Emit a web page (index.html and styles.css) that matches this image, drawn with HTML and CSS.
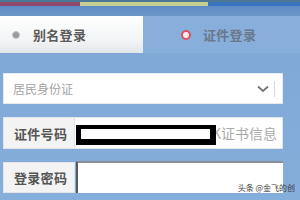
FILE: index.html
```html
<!DOCTYPE html>
<html lang="zh">
<head>
<meta charset="utf-8">
<link rel="stylesheet" href="styles.css">
</head>
<body>
<div class="top"></div>
<div class="stripe"><span class="s1"></span><span class="s2"></span><span class="s3"></span></div>
<div class="band"></div>
<div class="tabs">
  <div class="tab tab-a"><span class="radio radio-off"></span><span class="tab-text">别名登录</span></div>
  <div class="tab tab-b"><span class="radio radio-on"></span><span class="tab-text">证件登录</span></div>
</div>
<div class="content">
  <div class="select">
    <span class="select-text">居民身份证</span>
    <svg class="chev" width="12" height="8" viewBox="0 0 12 8"><path d="M1 1.5 L6 6 L11 1.5" fill="none" stroke="#777" stroke-width="1.8"/></svg>
    <span class="select-sep"></span>
  </div>
  <div class="row row-id">
    <div class="label">证件号码</div>
    <div class="field">
      <span class="redact"></span><span class="hint">K证书信息</span>
    </div>
  </div>
  <div class="row row-pw">
    <div class="label">登录密码</div>
    <div class="field field-pw"></div>
  </div>
</div>
<div class="watermark">头条 @金飞的创</div>
</body>
</html>
```
FILE: styles.css
```css
html, body {
  margin: 0;
  padding: 0;
}
body {
  width: 300px;
  height: 200px;
  overflow: hidden;
  background: linear-gradient(#7ea7d7, #86aedb);
  font-family: "Noto Sans CJK SC", "Noto Sans", sans-serif;
  position: relative;
}
.top {
  height: 2px;
  background: #4b7897;
}
.stripe {
  display: flex;
  height: 4px;
}
.s1 { width: 80px; background: #8e4b6d; }
.s2 { width: 128px; background: #c6cf90; }
.s3 { flex: 1; background: #3a73c0; }
.band {
  height: 10px;
  background: linear-gradient(#5f8cc4, #6c95c9);
}
.tabs {
  display: flex;
  height: 37px;
}
.tab {
  display: flex;
  align-items: center;
}
.tab-a {
  width: 131px;
  padding-left: 12px;
  background: linear-gradient(#ffffff, #f4f5f6 60%, #e4e7eb);
}
.tab-b {
  flex: 1;
  padding-left: 38px;
  background: #88aedb;
}
.radio {
  border-radius: 50%;
  box-sizing: border-box;
  flex: none;
}
.radio-off {
  width: 8px;
  height: 8px;
  background: #9a9a9a;
  border: 1px solid #c8c8c8;
  margin-right: 13px;
}
.radio-on {
  width: 10px;
  height: 10px;
  background: #fbeaec;
  border: 2px solid #d4545f;
  margin-right: 12px;
}
.tab-text {
  font-size: 13px;
  font-weight: 700;
  letter-spacing: 0.3px;
}
.tab-a .tab-text { color: #5b5b5b; }
.tab-b .tab-text { color: #6a788c; }
.content {
  padding: 20px 17px 0 3px;
}
.select {
  height: 31px;
  background: #fff;
  display: flex;
  align-items: center;
  padding-left: 9px;
  margin-bottom: 13px;
  box-sizing: border-box;
  border: 1px solid #e6e9ee;
}
.select-text {
  font-size: 12px;
  color: #a3a3a3;
  flex: 1;
}
.chev {
  margin-right: 5px;
}
.select-sep {
  width: 1px;
  height: 16px;
  background: #d8d8d8;
  margin-right: 7px;
}
.row {
  display: flex;
  height: 32px;
  margin-bottom: 13px;
}
.label {
  width: 72px;
  flex: none;
  background: #f3f3f3;
  color: #555;
  font-size: 13px;
  font-weight: 700;
  letter-spacing: 0.3px;
  display: flex;
  align-items: center;
  padding-left: 10px;
  box-sizing: border-box;
  border: 1px solid #e2e4e7;
}
.field {
  flex: 1;
  background: #fff;
  display: flex;
  align-items: center;
  border: 1px solid #e2e4e7;
  border-left: none;
}
.redact {
  position: relative;
  z-index: 1;
  width: 129px;
  height: 10px;
  border: solid #000;
  border-width: 4px 6px 6px 5px;
  margin-left: 1px;
  margin-top: 4px;
  background: #fff;
  flex: none;
}
.hint {
  font-size: 14px;
  color: #a9a9a9;
  margin-left: -4px;
  white-space: nowrap;
}
.row-pw {
  height: 31px;
}
.field-pw {
  border: none;
  border-top: 2px solid #8a8d92;
  border-left: 2px solid #55585c;
  margin-left: 1px;
  margin-top: -1px;
}
.watermark {
  position: absolute;
  right: 5px;
  top: 183px;
  font-size: 8px;
  color: #3a3a3a;
  line-height: 9px;
  white-space: nowrap;
}
```
